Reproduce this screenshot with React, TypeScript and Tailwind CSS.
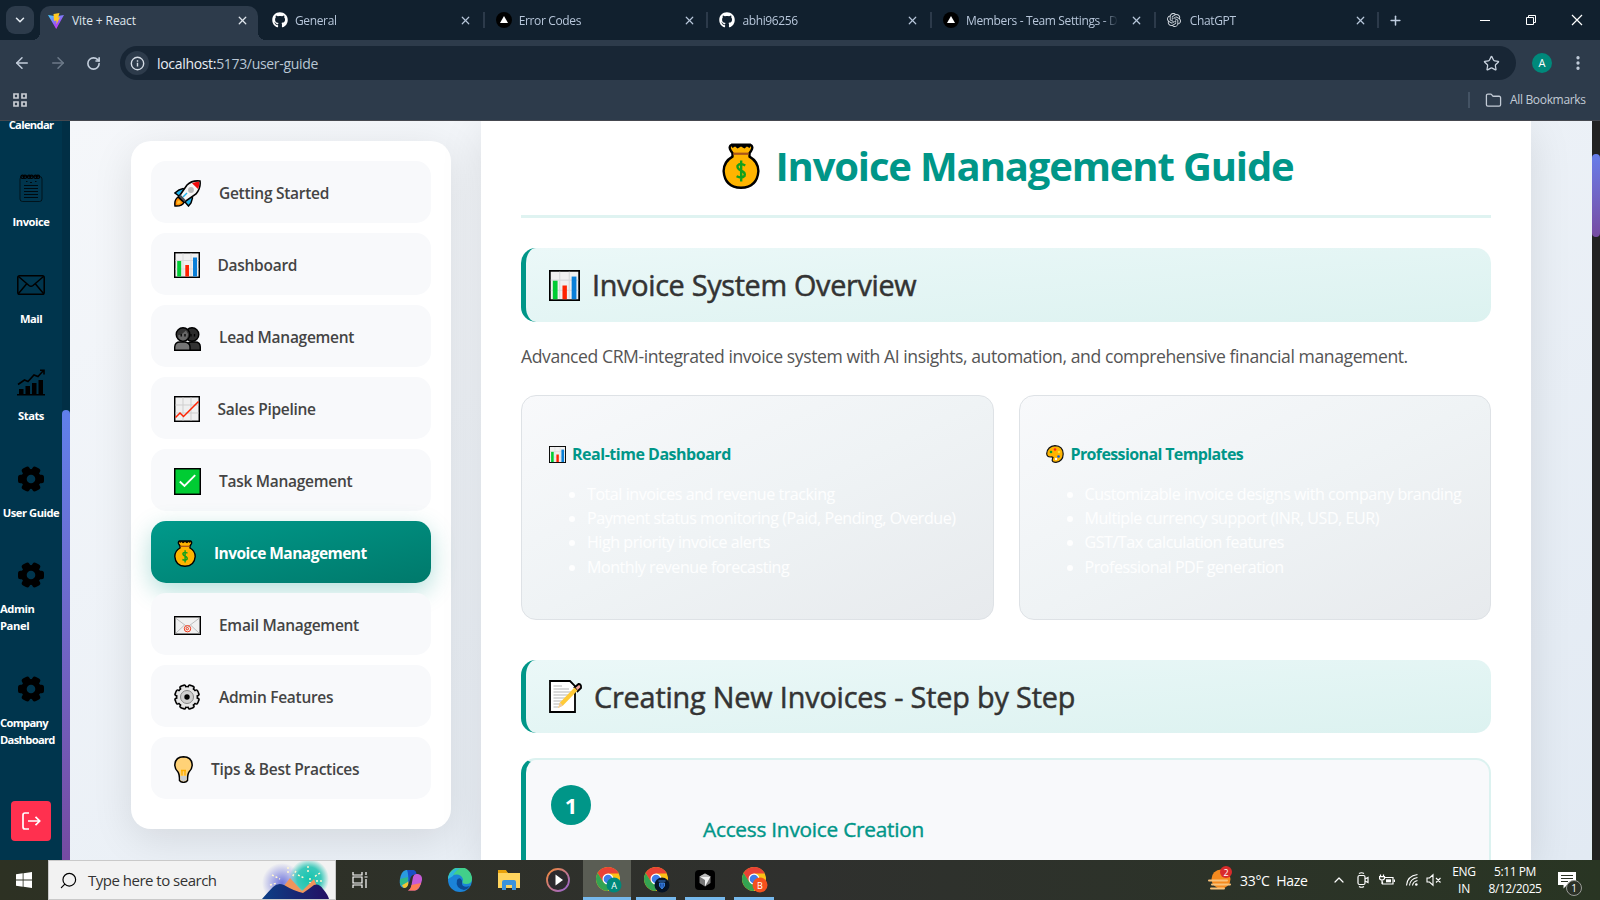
import React from "react";
import { FaGithub } from "react-icons/fa";
import { SiOpenai } from "react-icons/si";
import {
  ArrowLeft, ArrowRight, RotateCw, X, Plus, Star, Folder, ChevronDown, ChevronUp, EllipsisVertical, Search,
} from "lucide-react";

/* ---------- emoji drawings ---------- */
type P = { className?: string };

const Rocket = ({ className }: P) => (
  <svg viewBox="0 0 27 27" className={className}>
    <path d="M5 10 L9 8.500 L11 10 L17 16 L18.500 18 L17 23 L14.500 26 L11 22 L5 16 L1 13Z" fill="#22b5ee" stroke="#000" strokeWidth="1.500" />
    <path d="M1 26 Q0 20 4 17 L10 22.500 Q8 26.500 1 26Z" fill="#ff8a00" stroke="#000" strokeWidth="1.500" />
    <path d="M26 1 Q18 0 13 5 L5 16.500 L10.500 22 L22 14 Q27 8 26 1Z" fill="#f6f6f6" stroke="#000" strokeWidth="1.600" />
    <path d="M25.300 1.700 Q21 1.500 18 3.200 L24 9 Q25.500 6 25.300 1.700Z" fill="#f00a0a" />
    <circle cx="17" cy="10" r="2.900" fill="#b9b9b9" />
    <path d="M5 16.500 L10.500 22 L12 20.500 L6.500 14.500Z" fill="#4a4f57" />
    <path d="M9 17 L13 13" stroke="#22b5ee" strokeWidth="1.500" />
    <path d="M3 24 Q3 21 5 20 L7 22 Q6 24 3 24Z" fill="#ffc233" />
  </svg>
);
const Bars = ({ className }: P) => (
  <svg viewBox="0 0 26 26" className={className}>
    <rect x="0.700" y="0.700" width="24.600" height="24.600" fill="#f0f0f0" stroke="#000" strokeWidth="1.500" />
    <path d="M9 1.500V24M17 1.500V24M1.500 8.500H24.500M1.500 17H24.500" stroke="#d9dadb" strokeWidth="1" />
    <rect x="3.200" y="9" width="4" height="15.500" fill="#0c3" />
    <rect x="11.300" y="13" width="3.700" height="11.500" fill="#ff2200" />
    <rect x="19" y="5.500" width="4" height="19" fill="#0a7fd8" />
  </svg>
);
const People = ({ className }: P) => (
  <svg viewBox="0 0 27 24" className={className}>
    <circle cx="18" cy="7.500" r="6.800" fill="#2b2b2b" stroke="#000" strokeWidth="1.400" />
    <path d="M12 23.300V20Q13 15 18 15H21Q26.300 15 26.300 20V23.300Z" fill="#333" stroke="#000" strokeWidth="1.400" />
    <circle cx="9" cy="7.500" r="6.800" fill="#333" stroke="#000" strokeWidth="1.400" />
    <path d="M4 8.500Q9 7 12 3.500L14 7Q14 13 9 13.500Q4.500 13 4 8.500Z" fill="#666" />
    <path d="M.7 23.300V20Q1 15 6 15H11Q16 16 16 20V23.300Z" fill="#767676" stroke="#000" strokeWidth="1.400" />
    <path d="M7.200 7v2.500M11 7v2.500M17 7v2.500M20.500 7v2.500" stroke="#000" strokeWidth="1.300" />
  </svg>
);
const Trend = ({ className }: P) => (
  <svg viewBox="0 0 26 26" className={className}>
    <rect x="0.700" y="0.700" width="24.600" height="24.600" fill="#f0f0f0" stroke="#000" strokeWidth="1.500" />
    <path d="M9 1.500V24.500M17 1.500V24.500M1.500 9H24.500M1.500 17H24.500" stroke="#cfcfcf" strokeWidth="1" />
    <path d="M1.500 21.500L6 17L9.500 20.500L24.500 5.500" stroke="#ff2200" strokeWidth="1.500" fill="none" />
  </svg>
);
const CheckBox = ({ className }: P) => (
  <svg viewBox="0 0 27 27" className={className}>
    <rect x="0.700" y="0.700" width="25.600" height="25.600" fill="#0c3" stroke="#000" strokeWidth="1.500" />
    <path d="M5.800 13.500L10.500 18L21.200 7.200" stroke="#fff" strokeWidth="1.900" fill="none" />
  </svg>
);
const MoneyBag = ({ className }: P) => (
  <svg viewBox="0 0 22 27" className={className}>
    <path d="M5.500 1H16.500Q18.500 2 17 4.500L16 6V8Q21.200 11 21.200 16.500Q20.500 26 11 26.300Q1.500 26 .8 16.500Q.8 11 6 8V6L5 4.500Q3.500 2 5.500 1Z" fill="#ffb400" stroke="#000" strokeWidth="1.400" />
    <path d="M5 1.300L6 3L7.500 2L9 3.300L11 2L13 3.300L14.500 2L16 3L17 1.300Z" fill="#000" />
    <path d="M6.500 6.300H15.500" stroke="#a8541b" strokeWidth="1.300" />
    <path d="M13.500 13.200Q10.500 11.500 9 13.300Q8.500 15 11 16.200Q13.800 17.300 13.100 19.300Q11.500 21 8.400 19.500M11.100 10.300V22.600" stroke="#12a01c" strokeWidth="1.400" fill="none" />
  </svg>
);
const Mail = ({ className }: P) => (
  <svg viewBox="0 0 27 19" className={className}>
    <rect x="0.700" y="0.700" width="25.600" height="17.600" fill="#f1f1f1" stroke="#000" strokeWidth="1.500" />
    <path d="M1.500 17.500L10.500 9M25.500 17.500L16.500 9M1.500 2L13.500 11L25.500 2" stroke="#bdbdbd" strokeWidth="1" fill="none" />
    <circle cx="13.500" cy="12.700" r="3.200" stroke="#f33818" strokeWidth="1" fill="none" />
    <circle cx="13.300" cy="12.700" r="1.200" stroke="#f33818" strokeWidth="1" fill="none" />
  </svg>
);
const GearEmoji = ({ className }: P) => (
  <svg viewBox="0 0 26 26" className={className}>
    {[0, 45, 90, 135].map((a) => (
      <rect key={a} x="10" y="0.800" width="6" height="24.400" rx="1.500" fill="#e6e6e6" stroke="#000" strokeWidth="1.600" transform={`rotate(${a + 22.5} 13 13)`} />
    ))}
    <circle cx="13" cy="13" r="10.300" fill="#e6e6e6" stroke="#000" strokeWidth="1.300" />
    {[0, 45, 90, 135].map((a) => (
      <rect key={a} x="10.900" y="1.900" width="4.200" height="22.200" fill="#e6e6e6" transform={`rotate(${a + 22.5} 13 13)`} />
    ))}
    <circle cx="13" cy="13" r="6.500" fill="#cfcfcf" stroke="#888" strokeWidth="1" />
    <circle cx="13" cy="13" r="2.700" fill="#000" />
  </svg>
);
const Bulb = ({ className }: P) => (
  <svg viewBox="0 0 19 27" className={className}>
    <path d="M9.500 .8Q18 1 18.200 9.500Q18 13 15 16Q13.500 18 13.500 24.500Q12 26.300 9.500 26.300Q7 26.300 5.500 24.500Q5.500 18 4 16Q1 13 .8 9.500Q1 1 9.500 .8Z" fill="#ffd277" stroke="#000" strokeWidth="1.500" />
    <path d="M6.300 20H12.700V24L9.500 25.500L6.300 24Z" fill="#c9cdd0" />
    <path d="M7 14.500H12M8 14.500V19.500M11 14.500V19.500" stroke="#ffae00" strokeWidth="1.400" />
  </svg>
);
const Palette = ({ className }: P) => (
  <svg viewBox="0 0 18 18" className={className}>
    <path d="M9 .7Q17 1 17.200 9Q17 16.500 10 17.300Q6.500 17.300 6.200 15.500Q6.200 14 7 12.500Q6 11.500 4.500 12Q.8 12 .7 8.500Q1.500 1.500 9 .7Z" fill="#ffb400" stroke="#111" strokeWidth="1.200" />
    <circle cx="5" cy="7" r="1.300" fill="#0a9a2c" /><circle cx="9" cy="4.500" r="1.300" fill="#f22" />
    <circle cx="13" cy="7" r="1.300" fill="#ffdf3a" /><circle cx="12.500" cy="11.500" r="1.300" fill="#0a5be0" /><circle cx="10" cy="14" r="1.200" fill="#fff" />
  </svg>
);
const Memo = ({ className }: P) => (
  <svg viewBox="0 0 33 33" className={className}>
    <path d="M1 1H21L26 6V32H1Z" fill="#fff" stroke="#000" strokeWidth="1.800" />
    <path d="M4.500 6H13M4.500 9H20M4.500 12H22M4.500 15H20M4.500 18H17M4.500 21H15M4.500 24H12M4.500 27H9" stroke="#b5b5b5" strokeWidth="1" />
    <path d="M25.500 7.500L29.500 4Q32.500 4 32 8L28.500 11.500Z" fill="#f2a59c" stroke="#000" strokeWidth="1.800" />
    <path d="M25.500 7.500L28.500 10.500L14 25.500L9 28L11 22.500Z" fill="#ffca38" />
    <path d="M9 28L11 22.500L14 25.500Z" fill="#f0c9a0" />
  </svg>
);

/* ---------- browser chrome ---------- */
const ViteLogo = () => (
  <svg viewBox="0 0 16 16" className="h-4 w-4">
    <defs>
      <linearGradient id="vg" x1="0" y1="0" x2=".7" y2="1"><stop stopColor="#41d1ff" /><stop offset=".7" stopColor="#a24bf5" /><stop offset="1" stopColor="#e13cf5" /></linearGradient>
    </defs>
    <path d="M0 2L8 3.300L16 2L8.200 16Z" fill="url(#vg)" />
    <path d="M5.500 1L11.500 0L10.200 4.500L12 4.200L8.300 11.500L8.600 7.500L6 8Z" fill="#ffc820" />
  </svg>
);
const Vercel = () => (
  <svg viewBox="0 0 16 16" className="h-4 w-4"><circle cx="8" cy="8" r="8" fill="#000" /><path d="M8 4L12 11H4Z" fill="#fff" /></svg>
);

function Tab({ icon, title }: { icon: React.ReactNode; title: string }) {
  return (
    <div className="relative flex h-[34px] w-[223.700px] shrink-0 items-center pl-[11px] text-[12px] tracking-[-0.360px] text-[#b7c6da]">
      <span className="flex w-4 shrink-0">{icon}</span>
      <span className="ml-[7px] mt-px w-[152px] overflow-hidden whitespace-nowrap [mask-image:linear-gradient(to_right,#000_90%,transparent)]">{title}</span>
      <X className="ml-[12px] h-[13px] w-[13px] shrink-0" strokeWidth={2.2} />
      <span className="absolute right-0 top-[9px] h-4 w-[2px] bg-[#2c3a4a]" />
    </div>
  );
}

function Browser() {
  return (
    <header className="flex h-[121px] flex-col border-b border-[#45484f] bg-[#2d3b4b]">
      <div className="flex h-10 shrink-0 items-end bg-[#11202e]">
        <div className="mb-[6px] ml-[6px] flex h-7 w-7 items-center justify-center rounded-[9px] bg-[#2d3b4b] text-[#e4eaf1]">
          <ChevronDown className="h-[14px] w-[14px]" strokeWidth={2.6} />
        </div>
        <div className="relative ml-[6px] flex h-[34px] w-[218px] items-center rounded-t-[10px] bg-[#2d3b4b] pb-[5px] pl-2 text-[12px] tracking-[-0.100px] text-[#dfe5ec]">
          <span className="absolute -left-2 bottom-0 h-2 w-2 bg-[radial-gradient(circle_at_0_0,transparent_8px,#2d3b4b_8px)]" />
          <span className="absolute -right-2 bottom-0 h-2 w-2 bg-[radial-gradient(circle_at_100%_0,transparent_8px,#2d3b4b_8px)]" />
          <ViteLogo />
          <span className="ml-2 mt-px w-[164px]">Vite + React</span>
          <X className="h-[13px] w-[13px]" strokeWidth={2.4} />
        </div>
        <div className="flex h-10 items-center pl-[3px]">
          <Tab icon={<FaGithub className="h-4 w-4 text-white" />} title="General" />
          <Tab icon={<Vercel />} title="Error Codes" />
          <Tab icon={<FaGithub className="h-4 w-4 text-white" />} title="abhi96256" />
          <Tab icon={<Vercel />} title="Members - Team Settings - D" />
          <Tab icon={<SiOpenai className="h-[14px] w-[14px] text-[#d5dbe2]" />} title="ChatGPT" />
          <Plus className="ml-[9px] h-[15px] w-[15px] text-[#c0cde0]" strokeWidth={2.4} />
        </div>
        <div className="ml-auto flex h-10 items-center text-white">
          <svg viewBox="0 0 12 12" className="mr-[34px] h-3 w-3"><path d="M1 6.500H11" stroke="#fff" /></svg>
          <svg viewBox="0 0 12 12" className="mr-[34px] h-3 w-3" fill="none" stroke="#fff"><path d="M1.500 3.500H8.500V10.500H1.500Z" /><path d="M3.500 3.500V1.500H10.500V8.500H8.500" /></svg>
          <svg viewBox="0 0 12 12" className="mr-[17px] h-3 w-3" stroke="#fff" strokeWidth="1.200"><path d="M1 1L11 11M11 1L1 11" /></svg>
        </div>
      </div>
      <div className="flex h-[46px] shrink-0 items-center pl-[13px] text-[#c3cedc]">
        <ArrowLeft className="h-[18px] w-[18px]" strokeWidth={2} />
        <ArrowRight className="ml-[18px] h-[18px] w-[18px] text-[#6d7a89]" strokeWidth={2} />
        <RotateCw className="ml-[19px] h-[15px] w-[15px]" strokeWidth={2.6} />
        <div className="ml-[19px] flex h-[34px] w-[1396px] items-center rounded-full bg-[#182635] pl-[5px]">
          <span className="flex h-6 w-6 items-center justify-center rounded-full bg-[#2d3b4b]">
            <svg viewBox="0 0 16 16" className="h-[15px] w-[15px]" fill="none" stroke="#d5dce5" strokeWidth="1.500"><circle cx="8" cy="8" r="6.600" /><path d="M8 7.200V11.300M8 4.600V6" /></svg>
          </span>
          <span className="ml-2 text-[14px] tracking-[-0.320px] text-[#b9c6d4]"><span className="text-[#e8edf3]">localhost:</span>5173/user-guide</span>
          <Star className="ml-auto mr-[16px] h-[17px] w-[17px] text-[#c9d3df]" strokeWidth={1.8} />
        </div>
        <span className="ml-4 flex h-5 w-5 items-center justify-center rounded-full bg-[#00897b] text-[11px] text-white">A</span>
        <EllipsisVertical className="ml-[17px] h-[18px] w-[18px]" strokeWidth={2.4} />
      </div>
      <div className="flex h-7 items-center pl-[13px] text-[12px] text-[#c3cbd6]">
        <svg viewBox="0 0 14 14" className="h-[14px] w-[14px]" fill="none" stroke="#c9cdd3" strokeWidth="1.700"><path d="M1 1H5V5H1ZM9 1H13V5H9ZM1 9H5V13H1ZM9 9H13V13H9Z" /></svg>
        <span className="ml-auto h-4 w-[2px] bg-[#445364]" />
        <Folder className="ml-[15px] h-[17px] w-[17px]" strokeWidth={1.800} />
        <span className="ml-[8px] w-[90px] whitespace-nowrap tracking-[-0.330px]">All Bookmarks</span>
      </div>
    </header>
  );
}

/* ---------- app rail ---------- */
const Cog = () => (
  <svg viewBox="0 0 28 28" className="h-7 w-7">
    {[30, 90, 150].map((a) => <rect key={a} x="9.800" y="1" width="8.400" height="26" rx="2.500" transform={`rotate(${a} 14 14)`} />)}
    <circle cx="14" cy="14" r="10" />
    <circle cx="14" cy="14" r="4.300" fill="#00354d" />
  </svg>
);
const NoteIcon = () => (
  <svg viewBox="0 0 28 28" className="h-7 w-7" fill="none" stroke="#000" strokeWidth=".8">
    <rect x="3" y="2.500" width="22" height="25" rx="2.500" strokeOpacity=".8" />
    {[5.500, 8, 12, 14.500, 18.500, 21].map((x) => <circle key={x} cx={x} cy="2.800" r="1.700" strokeWidth="1.100" />)}
    <path d="M7 11.500H21M7 14.500H21M7 17.500H21M7 20.500H21M7 23.500H21M9 7.500H10.500M13 8.500H15M18 7.500H19.500" />
  </svg>
);
const EnvelopeIcon = () => (
  <svg viewBox="0 0 28 28" className="h-7 w-7" fill="none" stroke="#000" strokeWidth="1.500">
    <rect x="0.800" y="4.800" width="26.400" height="18.400" rx="1.800" />
    <path d="M1.500 5.500L12 14.500Q14 16 16 14.500L26.500 5.500M1.500 22.500L9.500 13M26.500 22.500L18.500 13" />
  </svg>
);
const StatsIcon = () => (
  <svg viewBox="0 0 28 28" className="h-7 w-7">
    <path d="M0 26H28V27.500H0ZM2 21H6.500V26H2ZM8.500 18H13V26H8.500ZM15 15H19.500V26H15ZM21.500 12H26V26H21.500Z" />
    <path d="M1 16.500L7.500 12L11 13.500L17 7L21 8.500L26.500 2.500M23 2.300H27V6.500" fill="none" stroke="#000" strokeWidth="1.600" />
  </svg>
);

function RailItem({ icon, label, className = "" }: { icon: React.ReactNode; label: string; className?: string }) {
  return (
    <div className={`flex w-[62px] shrink-0 flex-col items-center ${className}`}>
      {icon}
      <span className="mt-[11px] text-center text-[11.200px] leading-[17px]">{label}</span>
    </div>
  );
}

function Rail() {
  return (
    <aside className="flex w-[70px] shrink-0 bg-[#00354d] font-bold tracking-[-0.480px] text-white">
      <div className="flex w-[62px] flex-col">
        <span className="-mt-[5px] text-center text-[11.200px] leading-[17px] tracking-[-0.680px]">Calendar</span>
        <RailItem className="mt-[41px]" icon={<NoteIcon />} label="Invoice" />
        <RailItem className="mt-[41px]" icon={<EnvelopeIcon />} label="Mail" />
        <RailItem className="mt-[41px]" icon={<StatsIcon />} label="Stats" />
        <RailItem className="mt-[41px] whitespace-nowrap" icon={<Cog />} label="User Guide" />
        <div className="mt-[40px] flex flex-col">
          <span className="flex justify-center"><Cog /></span>
          <span className="mt-[11px] w-[50px] text-[11.200px] leading-[17px] tracking-[-0.400px]">Admin Panel</span>
        </div>
        <div className="mt-[41px] flex flex-col">
          <span className="flex justify-center"><Cog /></span>
          <span className="mt-[11px] w-[60px] text-[11.200px] leading-[17px] tracking-[-0.680px]">Company Dashboard</span>
        </div>
        <button className="ml-[11px] mt-[53px] flex h-10 w-10 shrink-0 items-center justify-center rounded bg-[#ff304f]">
          <svg viewBox="0 0 20 20" className="h-5 w-5" fill="none" stroke="#fff" strokeWidth="1.700"><path d="M8 2H4Q2 2 2 4V16Q2 18 4 18H8M7 10H18.500M14.500 5.800L18.700 10L14.500 14.200" /></svg>
        </button>
      </div>
      <div className="flex w-2 flex-col justify-end bg-[#012f45]">
        <div className="h-[450px] rounded-t bg-gradient-to-b from-[#5f80ec] to-[#764ba2]" />
      </div>
    </aside>
  );
}

/* ---------- guide ---------- */
const topics = [
  { icon: <Rocket className="h-[27px] w-[27px]" />, label: "Getting Started", gap: "gap-[18px]" },
  { icon: <Bars className="h-[26px] w-[26px]" />, label: "Dashboard", gap: "gap-[17.500px]" },
  { icon: <People className="mt-1 h-6 w-[27px]" />, label: "Lead Management", gap: "gap-[18px]" },
  { icon: <Trend className="h-[26px] w-[26px]" />, label: "Sales Pipeline", gap: "gap-[17.500px]" },
  { icon: <CheckBox className="h-[27px] w-[27px]" />, label: "Task Management", gap: "gap-[18px]" },
  { icon: <MoneyBag className="h-[27px] w-[22px]" />, label: "Invoice Management", gap: "gap-[18px]", active: true },
  { icon: <Mail className="mt-px h-[19px] w-[27px]" />, label: "Email Management", gap: "gap-[18px]" },
  { icon: <GearEmoji className="h-[26px] w-[26px]" />, label: "Admin Features", gap: "gap-[19px]" },
  { icon: <Bulb className="h-[27px] w-[19px]" />, label: "Tips & Best Practices", gap: "gap-[18px]" },
];

function TopicNav() {
  return (
    <nav className="ml-[61px] mt-5 flex h-[688px] w-80 shrink-0 flex-col gap-[10px] rounded-[20px] bg-white p-5 shadow-[0_10px_40px_rgba(0,0,0,0.1)]">
      {topics.map((t) => (
        <div
          key={t.label}
          className={`flex h-[62px] shrink-0 items-center rounded-[15px] pl-[23px] pt-[2px] text-[15.500px] ${t.gap} ${
            t.active
              ? "bg-gradient-to-br from-[#009a8b] to-[#00796b] font-bold tracking-[-0.540px] text-white shadow-[0_8px_25px_rgba(0,150,136,0.3)]"
              : "bg-[#f8f9fb] font-semibold tracking-[-0.280px] text-[#444]"
          }`}
        >
          {t.icon}
          <span className="pt-[2px]">{t.label}</span>
        </div>
      ))}
    </nav>
  );
}

function SectionTitle({ icon, children, className = "" }: { icon: React.ReactNode; children: React.ReactNode; className?: string }) {
  return (
    <h2 className={`flex shrink-0 items-center rounded-[15px] border-l-[5px] border-[#009688] bg-gradient-to-br from-[#ebf8f8] to-[#dcf2f0] pl-[23px] text-[28.800px] text-[#333] [-webkit-text-stroke:0.500px_#333] ${className}`}>
      {icon}
      <span>{children}</span>
    </h2>
  );
}

function FeatureCard({ icon, title, items, spacing }: { icon: React.ReactNode; title: string; items: string[]; spacing: string }) {
  return (
    <article className="flex h-[225px] min-w-0 flex-1 flex-col rounded-[15px] border border-[#dee2e6] bg-gradient-to-br from-[#f8f9fb] via-[#eff3f5] to-[#e7eaed] px-[26px]">
      <h3 className={`mt-[46px] flex h-6 items-center text-[16px] font-bold text-[#009688] ${spacing}`}>{icon}<span>{title}</span></h3>
      <ul className="mt-[16px] list-disc pl-[39px] text-[16px] leading-[24.200px] tracking-[-0.430px] text-white/90">
        {items.map((i) => <li key={i} className="whitespace-nowrap">{i}</li>)}
      </ul>
    </article>
  );
}

function Guide() {
  return (
    <main className="ml-[30px] flex w-[1050px] shrink-0 flex-col overflow-hidden bg-white px-10 shadow-[0_10px_40px_rgba(0,0,0,0.1)]">
      <h1 className="flex h-[97px] shrink-0 items-center justify-center gap-[15px] border-b-[3px] border-[#dff3f1] pb-[4px] pl-[4px] text-[40px] font-bold tracking-[-1.150px] text-[#009688]">
        <MoneyBag className="h-[46px] w-[38px]" />
        <span>Invoice Management Guide</span>
      </h1>
      <SectionTitle className="mt-[30px] h-[74px] tracking-[-0.310px]" icon={<Bars className="mr-3 h-[31px] w-[31px]" />}>Invoice System Overview</SectionTitle>
      <p className="mt-[19px] h-[31px] shrink-0 whitespace-nowrap text-[17.600px] leading-[30px] tracking-[-0.430px] text-[#555]">
        Advanced CRM-integrated invoice system with AI insights, automation, and comprehensive financial management.
      </p>
      <div className="mt-[23px] flex gap-[25px]">
        <FeatureCard spacing="gap-[6px] tracking-[-0.480px]" icon={<Bars className="ml-[1px] h-[17px] w-[17px]" />} title="Real-time Dashboard" items={["Total invoices and revenue tracking", "Payment status monitoring (Paid, Pending, Overdue)", "High priority invoice alerts", "Monthly revenue forecasting"]} />
        <FeatureCard spacing="gap-[7px] tracking-[-0.620px]" icon={<Palette className="h-[18px] w-[18px]" />} title="Professional Templates" items={["Customizable invoice designs with company branding", "Multiple currency support (INR, USD, EUR)", "GST/Tax calculation features", "Professional PDF generation"]} />
      </div>
      <SectionTitle className="mt-[40px] h-[73px] tracking-[-0.170px]" icon={<Memo className="mr-3 h-[33px] w-[33px]" />}>Creating New Invoices - Step by Step</SectionTitle>
      <section className="mt-[25px] flex h-[300px] shrink-0 rounded-[15px] border-2 border-l-[5px] border-[#dcf2f0] border-l-[#009688] bg-[#f8f9fb] pl-[25px] pt-[25px]">
        <span className="flex h-10 w-10 items-center justify-center rounded-full bg-[#009688] text-[22px] font-bold text-white">1</span>
        <h3 className="ml-[112px] mt-[29px] h-[30px] text-[20.800px] leading-[30px] tracking-[-0.240px] text-[#009688] [-webkit-text-stroke:0.400px_#009688]">Access Invoice Creation</h3>
      </section>
    </main>
  );
}

/* ---------- task bar ---------- */
const Chrome = ({ badge, letter }: { badge: string; letter: string }) => (
  <svg viewBox="0 0 26 26" className="h-[26px] w-[26px]">
    <circle cx="12" cy="12" r="12" fill="#fbc116" />
    <path d="M12 6.500H22.700A12 12 0 0 0 12 0 12 12 0 0 0 1.600 6L7 15Z" fill="#e94235" />
    <path d="M1.600 6L7.200 15L12 17.500L16.800 15L11.500 24A12 12 0 0 1 1.600 6Z" fill="#34a352" />
    <circle cx="12" cy="12" r="5.500" fill="#fff" /><circle cx="12" cy="12" r="4.300" fill="#3f7de8" />
    <circle cx="18" cy="18" r="7.500" fill={badge} />
    {letter ? (
      <text x="18" y="21.500" fontSize="9" textAnchor="middle" fill="#fff" fontFamily="Open Sans, sans-serif">{letter}</text>
    ) : (
      <path d="M14.500 14H21.500M15.500 16H20.500V19L18 22L15.500 19ZM18 16V21" fill="#1b4fa8" stroke="#3f8ae8" strokeWidth=".9" />
    )}
  </svg>
);

function TaskBar() {
  return (
    <footer className="flex h-10 shrink-0 items-center bg-gradient-to-r from-[#2d3123] via-[#2f302e] to-[#293523] text-[12px] text-white">
      <span className="flex w-12 justify-center"><svg viewBox="0 0 16 16" className="h-4 w-4" fill="#fff"><path d="M0 2.300L6.700 1.300V7.600H0ZM7.500 1.200L16 0V7.600H7.500ZM0 8.400H6.700V14.700L0 13.700ZM7.500 8.400H16V16L7.500 14.800Z" /></svg></span>
      <div className="flex h-10 w-[288px] items-center border border-[#c9c9c9] bg-[#f2f2f2] pl-[10px] text-[15px] text-[#333]">
        <Search className="h-[19px] w-[19px] -scale-x-100 text-black" strokeWidth={1.500} />
        <span className="ml-[10px] w-[174px] tracking-[-0.500px]">Type here to search</span>
        <svg viewBox="0 0 72 38" className="h-[38px] w-[72px]">
          <defs>
            <radialGradient id="g1"><stop stopColor="#7177dd" /><stop offset="1" stopColor="#7177dd" stopOpacity="0" /></radialGradient>
            <radialGradient id="g2"><stop stopColor="#16c5ae" /><stop offset=".6" stopColor="#3cc9ba" /><stop offset="1" stopColor="#3cc9ba" stopOpacity="0" /></radialGradient>
            <linearGradient id="g3"><stop stopColor="#0c3f86" /><stop offset="1" stopColor="#241063" /></linearGradient>
          </defs>
          <circle cx="20" cy="22" r="20" fill="url(#g1)" /><circle cx="47" cy="18" r="20" fill="url(#g2)" />
          <path d="M18 30L28 17L40 30L52 18L60 38H14Z" fill="#f0955c" />
          <path d="M0 38Q7 30 11 26Q16 21 22 24Q32 30 41 32Q47 28 52 24Q57 22 61 28Q66 34 67 38Z" fill="url(#g3)" />
          <path d="M26 6V14M10 14L18 18M34 10L30 16M46 5V13M36 14L42 17M58 12L52 16M60 20L53 20M8 24L15 22M48 17V22" stroke="#fff6d0" strokeWidth="1.500" strokeDasharray="2 2" />
        </svg>
      </div>
      <div className="flex h-10 items-center pl-4">
        <svg viewBox="0 0 16 16" className="h-4 w-4" fill="none" stroke="#fff" strokeWidth="1.200"><path d="M1 0V3H10V0M1 16V13H10V16M1 5H10V11H1ZM14 0V3M14 7V16M12.500 5H15.500" /></svg>
        <svg viewBox="0 0 24 24" className="ml-[31px] h-6 w-6">
          <path d="M7 2H15Q11 4 10.500 9L9 16Q8 20 5 20Q0 19 .8 12Q2 3 7 2Z" fill="#2a9be0" />
          <path d="M3 17L10 13L9 17Q8 20 5 20Q3.500 19.500 3 17Z" fill="#f4c433" />
          <path d="M1 11L9 9L8.500 14L2 17.500Q.5 15 1 11Z" fill="#2fb98a" />
          <path d="M8 2H14Q17 2 17.500 6L14 7Q11.500 8 11 12L9.500 16Q9.500 5 8 2Z" fill="#1a50c6" />
          <path d="M17 6H19Q23.500 7 23 12Q21 22 16 22.500H9Q12 21 12.500 17L14 9Q15 6 17 6Z" fill="#c65bd6" />
          <path d="M12.500 17L22 15Q19.500 22 16 22.500H9Q12 21 12.500 17Z" fill="#ff7d55" />
        </svg>
        <svg viewBox="0 0 24 24" className="ml-[25px] h-6 w-6">
          <circle cx="12" cy="12" r="12" fill="#1b83d8" /><path d="M0 11A12 12 0 0 1 24 11Q24 16 18 16Q14 16 14.500 13.500Q16 11 13 8Q7 4 0 11Z" fill="#42cf8a" /><path d="M0 11A12 12 0 0 1 12 0Q6 4 5 8Z" fill="#2eb6e0" /><path d="M9 12Q7 20 16 22Q20 21 22 18Q15 20 14 16Q15 13 13 11Q11 9 9 12Z" fill="#0c4a94" />
        </svg>
        <svg viewBox="0 0 22 20" className="ml-[26px] h-5 w-[22px]"><path d="M0 1H8L10 3H22V18H0Z" fill="#ffd45e" /><path d="M0 0H8L9.500 3H0Z" fill="#e8a20c" /><path d="M4 20V12Q4 10 6 10H16Q18 10 18 12V20H14V15H8V20Z" fill="#3b93dc" /></svg>
        <svg viewBox="0 0 24 24" className="ml-[26px] h-6 w-6"><defs><linearGradient id="mg" x1="0" y1="0" x2="1" y2="1"><stop stopColor="#f58a35" /><stop offset="1" stopColor="#9463d8" /></linearGradient></defs><circle cx="12" cy="12" r="11" fill="#2c2a2e" stroke="url(#mg)" strokeWidth="1.800" /><path d="M9.500 6.500L17 12L9.500 17.500Z" fill="#fff" /></svg>
        <span className="ml-[13px] flex h-10 w-12 items-center justify-center border-b-[3px] border-[#76b9ed] bg-[#5a5d54] pl-[3px] pt-[3px]"><Chrome badge="#00897b" letter="A" /></span>
        <span className="ml-[5px] flex h-10 w-10 items-center justify-center border-b-[3px] border-[#76b9ed] pl-[2px] pt-[3px]"><Chrome badge="#061326" letter="" /></span>
        <span className="ml-[9px] flex h-10 w-10 items-center justify-center border-b-[3px] border-[#76b9ed] pt-[3px]">
          <svg viewBox="0 0 20 20" className="h-5 w-5"><rect width="20" height="20" rx="4" fill="#000" /><path d="M10 3.500L15.500 6.500V13L10 16.500L4.500 13V6.500Z" fill="#777" /><path d="M4.500 6.500H15.500L10 16.500V10Z" fill="#f2f2f2" /><path d="M4.500 6.500L10 3.500L15.500 6.500Z" fill="#bbb" /></svg>
        </span>
        <span className="ml-[9px] flex h-10 w-10 items-center justify-center border-b-[3px] border-[#76b9ed] pl-[2px] pt-[3px]"><Chrome badge="#f4511e" letter="B" /></span>
      </div>
      <div className="ml-auto flex h-10 items-center">
        <span className="relative flex h-6 w-6">
          <svg viewBox="0 0 24 24" className="h-6 w-6">
            <circle cx="13" cy="11" r="9.500" fill="#f58a1f" />
            <path d="M1 12.500H19M4 16.500H22M3 20.500H16" stroke="#f9c27a" strokeWidth="2" strokeLinecap="round" />
          </svg>
          <span className="absolute -top-0.5 right-0 flex h-3 w-3 items-center justify-center rounded-full bg-[#d92b2b] text-[9px] leading-none">2</span>
        </span>
        <span className="ml-[8px] w-[69px] whitespace-nowrap text-[14px] tracking-[-0.300px]">33°C&nbsp; Haze</span>
        <ChevronUp className="ml-[22px] h-4 w-4" strokeWidth={1.800} />
        <svg viewBox="0 0 16 16" className="ml-[8px] h-4 w-4" fill="none" stroke="#fff" strokeWidth="1.200"><rect x="3" y="3.500" width="7" height="9" rx="1.500" /><path d="M10 7L13 5.500V10.500L10 9M4 1.500Q6.500 0 9 1.500M4 14.500Q6.500 16 9 14.500" /></svg>
        <svg viewBox="0 0 16 16" className="ml-[8px] h-4 w-4" fill="none" stroke="#fff" strokeWidth="1.200"><path d="M5 5.500H14V12H3.500V9.500M15.500 7.500V10M1.500 2.500V4.500M4.500 2.500V4.500M.5 4.700H5.500V6.500Q5 8 3 8Q1 8 .5 6.500ZM3 8V12" /><rect x="7" y="7.300" width="5" height="3" fill="#fff" stroke="none" /></svg>
        <svg viewBox="0 0 16 16" className="ml-[9px] h-4 w-4" fill="none" stroke="#fff" strokeWidth="1.100"><path d="M2.500 13.500Q3 4 13.500 2.500M5.500 13.500Q6 7 13.500 5.500M8.500 13.500Q9 9.500 13.500 8.500" /><circle cx="12.300" cy="12.500" r="1.300" fill="#fff" stroke="none" /></svg>
        <svg viewBox="0 0 16 16" className="ml-[6px] h-4 w-4" fill="none" stroke="#fff" strokeWidth="1.100"><path d="M1 6H3.500L7 2.800V13.200L3.500 10H1ZM10 6L14.500 10.500M14.500 6L10 10.500" /></svg>
        <span className="ml-[9px] w-[26px] text-center leading-[17px] tracking-[-0.300px]">ENG IN</span>
        <span className="ml-[10px] w-[56px] whitespace-nowrap text-center leading-[17px] tracking-[-0.420px]">5:11 PM<br />8/12/2025</span>
        <span className="relative ml-[15px] mr-[24px] flex h-[18px] w-[18px]">
          <svg viewBox="0 0 18 18" className="h-[18px] w-[18px]"><path d="M0 1H18V14H9L5.500 17.500V14H0Z" fill="#fff" /><path d="M3 4.500H15M3 7.500H15M3 10.500H10" stroke="#2b3325" strokeWidth="1.200" /></svg>
          <span className="absolute -bottom-[7px] -right-[6px] flex h-4 w-4 items-center justify-center rounded-full border border-[#9a9c98] bg-[#2b3127] text-[10px]">1</span>
        </span>
      </div>
    </footer>
  );
}

export default function App() {
  return (
    <div className="flex h-[900px] w-[1600px] flex-col overflow-hidden font-['Open_Sans','Noto_Sans',sans-serif]">
      <Browser />
      <div className="flex h-[739px] shrink-0 overflow-hidden">
        <Rail />
        <div className="flex w-[1522px] shrink-0 overflow-hidden bg-gradient-to-br from-[#f5f7fa] to-[#e2eaf3]">
          <TopicNav />
          <Guide />
        </div>
        <div className="flex w-2 flex-col bg-[#222]">
          <div className="mt-[33px] h-[83px] rounded bg-gradient-to-b from-[#667eea] to-[#764ba2]" />
        </div>
      </div>
      <TaskBar />
    </div>
  );
}
